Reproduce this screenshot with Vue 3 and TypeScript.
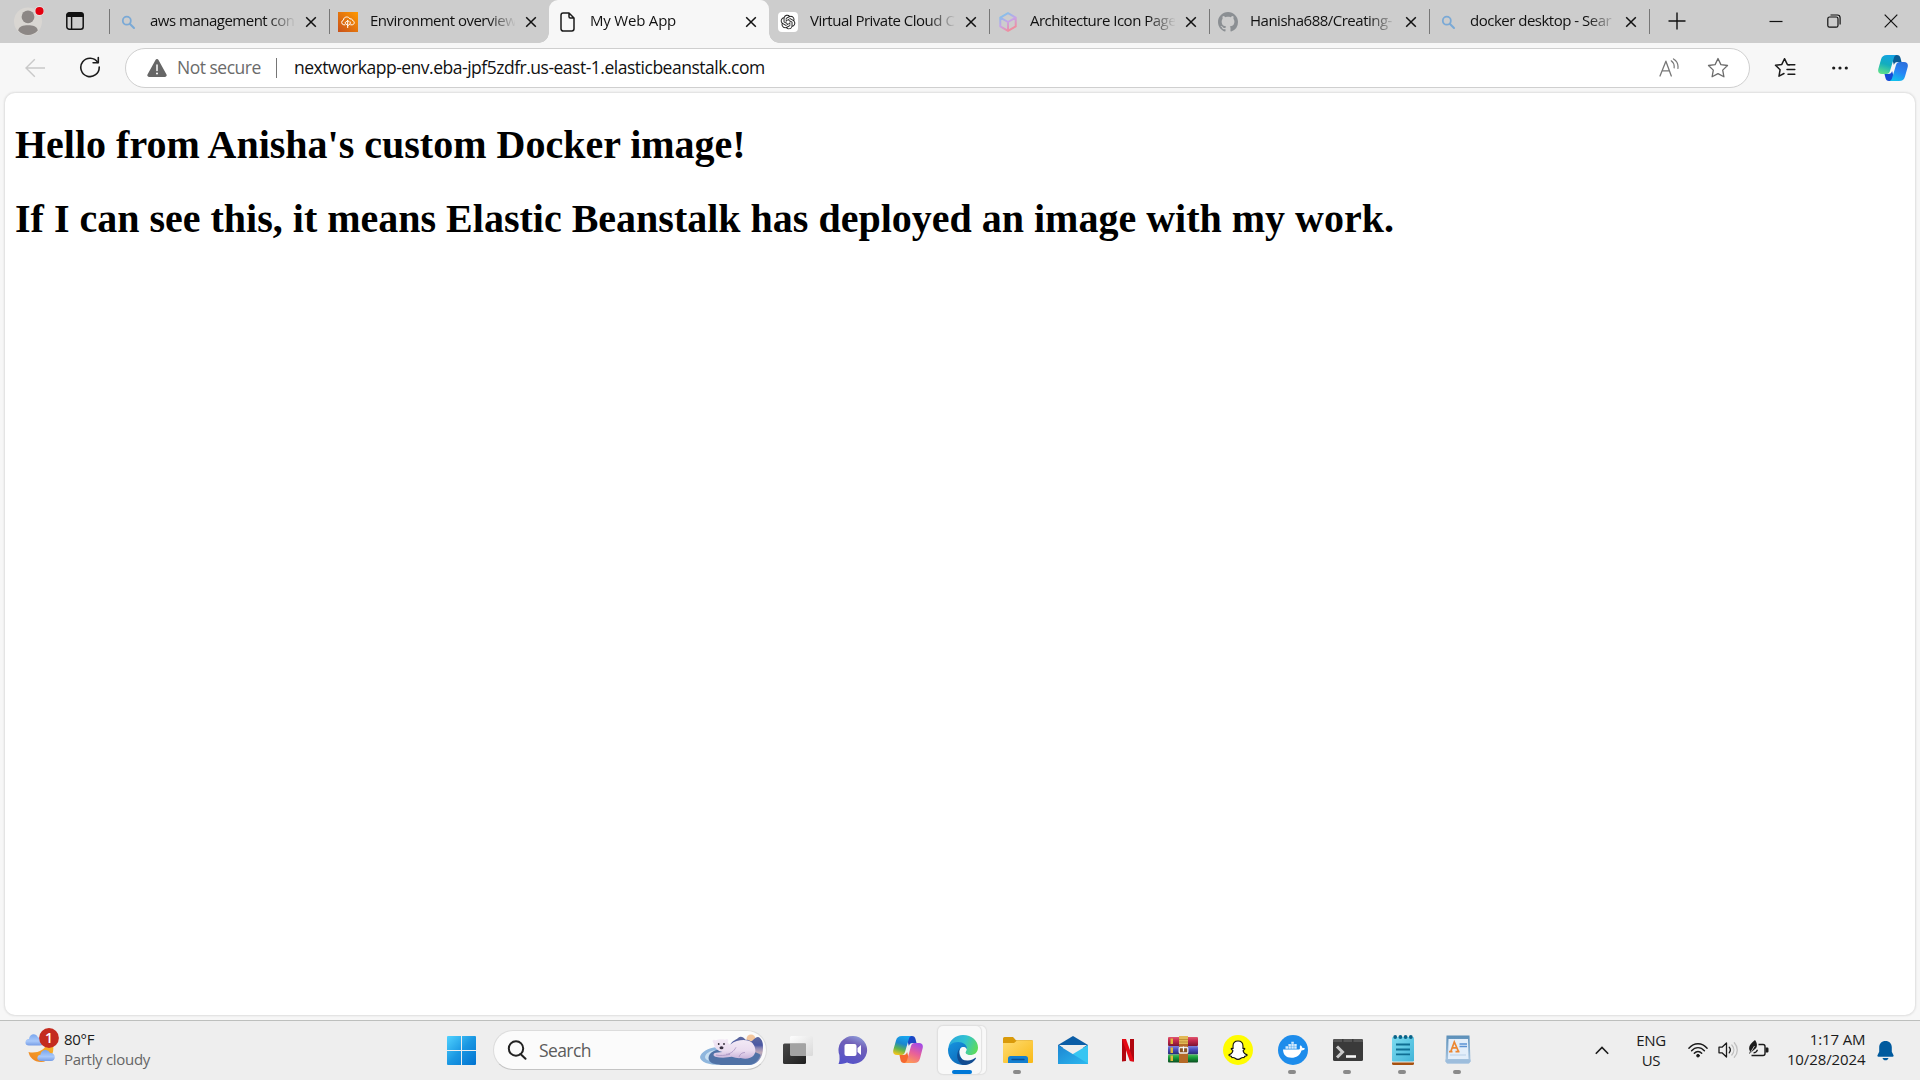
<script setup lang="ts">
interface Tab {
  title: string
  icon: 'search' | 'aws' | 'page' | 'openai' | 'cube' | 'github'
  active?: boolean
  divider?: boolean
}

interface TaskItem {
  name: string
  state?: 'running' | 'active'
}

const tabs: Tab[] = [
  { title: 'aws management con', icon: 'search', divider: true },
  { title: 'Environment overview', icon: 'aws', divider: true },
  { title: 'My Web App', icon: 'page', active: true },
  { title: 'Virtual Private Cloud C', icon: 'openai' },
  { title: 'Architecture Icon Page', icon: 'cube', divider: true },
  { title: 'Hanisha688/Creating-', icon: 'github', divider: true },
  { title: 'docker desktop - Sear', icon: 'search', divider: true },
]

const taskItems: TaskItem[] = [
  { name: 'taskview' },
  { name: 'chat' },
  { name: 'copilot' },
  { name: 'edge', state: 'active' },
  { name: 'explorer', state: 'running' },
  { name: 'mail' },
  { name: 'netflix' },
  { name: 'winrar' },
  { name: 'snapchat' },
  { name: 'docker', state: 'running' },
  { name: 'terminal', state: 'running' },
  { name: 'notepad', state: 'running' },
  { name: 'wordpad', state: 'running' },
]
</script>

<template>
  <div class="desktop">
    <header class="tabstrip">
      <div class="profile">
        <svg width="32" height="32" viewBox="0 0 32 32">
          <circle cx="16" cy="17.5" r="14" fill="#d9d6d2" />
          <circle cx="16" cy="12.8" r="6.4" fill="#8c8785" />
          <path d="M6.200 26.500C7 22.200 11 21.300 16 21.300s9 .9 9.800 5.200A13.500 13.500 0 0 1 16 31a13.500 13.500 0 0 1-9.800-4.500z" fill="#8c8785" />
          <circle cx="27.500" cy="7" r="4.800" fill="#e8e8e8" />
          <circle cx="27.500" cy="7" r="4.100" fill="#e3000f" />
        </svg>
      </div>
      <div class="workspaces">
        <svg width="20" height="20" viewBox="0 0 20 20">
          <rect x="1.800" y="1.800" width="16.400" height="16.400" rx="2.500" fill="none" stroke="#111" stroke-width="1.500" />
          <path d="M1.500 6V4a2.500 2.500 0 0 1 2.500-2.500h12A2.500 2.500 0 0 1 18.500 4v2z" fill="#111" />
          <path d="M6.600 5v13" stroke="#111" stroke-width="1.400" />
        </svg>
      </div>

      <div v-for="(tab, i) in tabs" :key="i" class="tab" :class="{ active: tab.active, divided: tab.divider }">
        <svg class="favicon" width="20" height="20" viewBox="0 0 20 20">
          <g v-if="tab.icon === 'search'" fill="none" stroke="#7aa9d6" stroke-linecap="round">
            <circle cx="8.800" cy="8.700" r="4" stroke-width="1.800" />
            <path d="M12 12l4 4" stroke-width="2" />
          </g>
          <g v-else-if="tab.icon === 'aws'">
            <defs>
              <linearGradient id="awsGrad" x1="0" y1="1" x2="1" y2="0">
                <stop offset="0" stop-color="#c8511b" /><stop offset="1" stop-color="#ff9900" />
              </linearGradient>
            </defs>
            <rect width="20" height="20" fill="url(#awsGrad)" />
            <g fill="none" stroke="#fff" stroke-width="1" stroke-linejoin="round" stroke-linecap="round">
              <path d="M7 12.800H5.800a2.400 2.400 0 0 1-.3-4.700C5.500 4.300 10.800 4 12 7c1.600-.6 2.400.4 2.500 1.500 2.500.5 2.200 4.100-.2 4.300h-1.600" />
              <path d="M9.700 15.600V8.500M8.400 9.700l1.300-1.300L11 9.700M7.300 10.200v1.200l2.400 2M12.200 10v1.800l-2.500 2" />
            </g>
          </g>
          <path v-else-if="tab.icon === 'page'" d="M5.200 1h5.800l5 5v10.800a2.200 2.200 0 0 1-2.200 2.200H5.200A2.200 2.200 0 0 1 3 16.800V3.200A2.200 2.200 0 0 1 5.200 1zM11 1v3.800A1.200 1.200 0 0 0 12.200 6H16" fill="none" stroke="#1b1b1b" stroke-width="1.500" stroke-linejoin="round" />
          <g v-else-if="tab.icon === 'openai'">
            <rect width="20" height="20" rx="4" fill="#fff" />
            <path transform="translate(2.700 2.700) scale(.61)" fill="#222" d="M22.2819 9.8211a5.9847 5.9847 0 0 0-.5157-4.9108 6.0462 6.0462 0 0 0-6.5098-2.9A6.0651 6.0651 0 0 0 4.9807 4.1818a5.9847 5.9847 0 0 0-3.9977 2.9 6.0462 6.0462 0 0 0 .7427 7.0966 5.98 5.98 0 0 0 .511 4.9107 6.051 6.051 0 0 0 6.5146 2.9001A5.9847 5.9847 0 0 0 13.2599 24a6.0557 6.0557 0 0 0 5.7718-4.2058 5.9894 5.9894 0 0 0 3.9977-2.9001 6.0557 6.0557 0 0 0-.7475-7.0729zm-9.022 12.6081a4.4755 4.4755 0 0 1-2.8764-1.0408l.1419-.0804 4.7783-2.7582a.7948.7948 0 0 0 .3927-.6813v-6.7369l2.02 1.1686a.071.071 0 0 1 .038.052v5.5826a4.504 4.504 0 0 1-4.4945 4.4944zm-9.6607-4.1254a4.4708 4.4708 0 0 1-.5346-3.0137l.142.0852 4.783 2.7582a.7712.7712 0 0 0 .7806 0l5.8428-3.3685v2.3324a.0804.0804 0 0 1-.0332.0615L9.74 19.9502a4.4992 4.4992 0 0 1-6.1408-1.6464zM2.3408 7.8956a4.485 4.485 0 0 1 2.3655-1.9728V11.6a.7664.7664 0 0 0 .3879.6765l5.8144 3.3543-2.0201 1.1685a.0757.0757 0 0 1-.071 0l-4.8303-2.7865A4.504 4.504 0 0 1 2.3408 7.872zm16.5963 3.8558L13.1038 8.364 15.1192 7.2a.0757.0757 0 0 1 .071 0l4.8303 2.7913a4.4944 4.4944 0 0 1-.6765 8.1042v-5.6772a.79.79 0 0 0-.407-.667zm2.0107-3.0231l-.142-.0852-4.7735-2.7818a.7759.7759 0 0 0-.7854 0L9.409 9.2297V6.8974a.0662.0662 0 0 1 .0284-.0615l4.8303-2.7866a4.4992 4.4992 0 0 1 6.6802 4.66zM8.3065 12.863l-2.02-1.1638a.0804.0804 0 0 1-.038-.0567V6.0742a4.4992 4.4992 0 0 1 7.3757-3.4537l-.142.0805L8.704 5.459a.7948.7948 0 0 0-.3927.6813zm1.0976-2.3654l2.602-1.4998 2.6069 1.4998v2.9994l-2.5974 1.4997-2.6067-1.4997z" />
          </g>
          <g v-else-if="tab.icon === 'cube'">
            <defs>
              <linearGradient id="cubeGrad" x1="0.200" y1="0" x2="0.700" y2="1">
                <stop offset="0" stop-color="#7cc4ea" /><stop offset=".5" stop-color="#c7a3e8" /><stop offset="1" stop-color="#f58b95" />
              </linearGradient>
            </defs>
            <path d="M10 1.200l7.700 4.400v8.800L10 18.800l-7.700-4.400V5.600zM2.300 5.600L10 10l7.700-4.400M10 10v8.800" fill="none" stroke="url(#cubeGrad)" stroke-width="2" stroke-linejoin="round" />
          </g>
          <path v-else fill="#8b8f93" transform="scale(1.250)" d="M8 0C3.580 0 0 3.580 0 8c0 3.540 2.290 6.530 5.470 7.590.4.070.55-.17.55-.38 0-.19-.01-.82-.01-1.490-2.010.37-2.530-.49-2.690-.94-.09-.23-.48-.94-.82-1.130-.28-.15-.68-.52-.01-.53.63-.01 1.080.58 1.230.82.72 1.210 1.870.87 2.330.66.070-.52.28-.87.510-1.070-1.780-.2-3.640-.89-3.640-3.950 0-.87.31-1.590.82-2.150-.08-.2-.36-1.020.08-2.120 0 0 .67-.21 2.200.82.64-.18 1.320-.27 2-.27s1.360.09 2 .27c1.530-1.040 2.200-.82 2.200-.82.44 1.100.16 1.920.08 2.120.51.56.82 1.270.82 2.150 0 3.070-1.870 3.750-3.650 3.950.29.25.54.73.54 1.480 0 1.070-.01 1.930-.01 2.200 0 .21.15.46.55.38A8.010 8.010 0 0 0 16 8c0-4.420-3.580-8-8-8z" />
        </svg>
        <span class="title">{{ tab.title }}</span>
        <svg class="close" width="12" height="12" viewBox="0 0 12 12"><path d="M1.200 1.200l9.600 9.600M10.800 1.200l-9.600 9.600" stroke="#111" stroke-width="1.500" /></svg>
      </div>

      <div class="newtab">
        <svg width="20" height="20" viewBox="0 0 20 20"><path d="M10 1.500v17M1.500 10h17" stroke="#111" stroke-width="1.400" /></svg>
      </div>
      <div class="winctl">
        <svg width="14" height="14" viewBox="0 0 14 14"><path d="M.5 7.500h13" stroke="#111" stroke-width="1.200" /></svg>
        <svg width="14" height="14" viewBox="0 0 14 14" fill="none" stroke="#111" stroke-width="1.200">
          <rect x=".8" y="3" width="10.200" height="10.200" rx="1.800" />
          <path d="M3.500 1h6.800a2.800 2.800 0 0 1 2.800 2.800v6.700" />
        </svg>
        <svg width="14" height="14" viewBox="0 0 14 14"><path d="M.7.7l12.600 12.600M13.300.7L.7 13.300" stroke="#111" stroke-width="1.200" /></svg>
      </div>
    </header>

    <div class="toolbar">
      <svg class="back" width="20" height="20" viewBox="0 0 20 20" fill="none" stroke="#c9c9c9" stroke-width="1.400"><path d="M20 10H1M9.800 1.300L1 10l8.800 8.700" /></svg>
      <svg class="reload" width="22" height="22" viewBox="0 0 22 22" fill="none" stroke="#1b1b1b" stroke-width="1.600" stroke-linecap="round" stroke-linejoin="round">
        <path d="M18.800 6.500A9.200 9.200 0 1 0 20.200 11" /><path d="M19.300 1.500v5.200h-5.200" />
      </svg>
      <div class="address">
        <svg class="warn" width="20" height="18" viewBox="0 0 20 18">
          <path d="M8.500.9a1.700 1.700 0 0 1 3 0l8 14.600a1.600 1.600 0 0 1-1.400 2.400H1.900A1.600 1.600 0 0 1 .5 15.500z" fill="#666" />
          <path d="M10 6v5.500" stroke="#fff" stroke-width="1.500" stroke-linecap="round" /><circle cx="10" cy="14.400" r="1" fill="#fff" />
        </svg>
        <span class="notsecure">Not secure</span>
        <i class="bar"></i>
        <span class="url">nextworkapp-env.eba-jpf5zdfr.us-east-1.elasticbeanstalk.com</span>
        <svg class="read" width="20" height="20" viewBox="0 0 20 20" fill="none" stroke="#777" stroke-width="1.300" stroke-linecap="round" stroke-linejoin="round">
          <path d="M1 18L6.900 3.200 12.300 18M3.200 12.800h7.300" /><path d="M12.200 2.800c2.300 1.700 3.300 4.100 2.900 7M14.500.9c3.400 2 5 5.200 4.400 9.500" stroke-width="1.200" />
        </svg>
        <svg class="star" width="22" height="22" viewBox="0 0 22 22" fill="none" stroke="#6b6b6b" stroke-width="1.300" stroke-linejoin="round">
          <path d="M11 1.500l2.900 6.100 6.600.9-4.800 4.600 1.200 6.700L11 16.600l-5.900 3.200 1.200-6.700L1.500 8.500l6.600-.9z" />
        </svg>
      </div>
      <svg class="favs" width="22" height="22" viewBox="0 0 22 22" fill="none" stroke="#1b1b1b" stroke-width="1.500" stroke-linejoin="round" stroke-linecap="round">
        <path d="M15.400 7.700l-2.100-.3L10.500 1.700 7.800 7.400l-6.300.9 4.600 4.400L5 19.200l5-2.700" /><path d="M13.800 7.700h7M13 12.500h7.800M14 17.200h6.800" />
      </svg>
      <svg class="dots" width="18" height="6" viewBox="0 0 18 6" fill="#1b1b1b"><circle cx="2.700" cy="3" r="1.600" /><circle cx="9" cy="3" r="1.600" /><circle cx="15.300" cy="3" r="1.600" /></svg>
      <svg class="sidepilot" width="30" height="28" viewBox="0 0 30 28">
        <defs>
          <linearGradient id="cpA" x1=".6" y1="0" x2=".3" y2="1"><stop offset="0" stop-color="#13a3e3" /><stop offset=".5" stop-color="#13aebd" /><stop offset="1" stop-color="#5ee08b" /></linearGradient>
          <linearGradient id="cpB" x1=".7" y1="0" x2=".3" y2="1"><stop offset="0" stop-color="#2b70dc" /><stop offset=".5" stop-color="#2785f5" /><stop offset="1" stop-color="#10c1ec" /></linearGradient>
        </defs>
        <path d="M13 1h6c2 0 3 1 3.500 3l1 4h-4c-2 0-3 1-3.600 3z" fill="#0a5c94" />
        <path d="M17 27h-6c-2 0-3-1-3.500-3l-1-4h4c2 0 3-1 3.600-3z" fill="#154bd6" />
        <path d="M9 1h9.500c-1.500.4-2.200 1.500-2.700 3.200L12 17c-.6 2-1.700 3-3.500 3H4C.8 20-.3 18 .3 15L3 5.500C3.800 2.500 5.500 1 9 1z" fill="url(#cpA)" />
        <path d="M21 27h-9.500c1.500-.4 2.200-1.500 2.700-3.200L18 11c.6-2 1.700-3 3.500-3H26c3.200 0 4.300 2 3.700 5L27 22.500c-.8 3-2.500 4.500-6 4.500z" fill="url(#cpB)" />
      </svg>
    </div>

    <div class="frame">
      <main class="page">
        <h1>Hello from Anisha's custom Docker image!</h1>
        <h1>If I can see this, it means Elastic Beanstalk has deployed an image with my work.</h1>
      </main>
    </div>

    <footer class="taskbar">
      <div class="weather">
        <svg width="36" height="36" viewBox="0 0 36 36">
          <defs>
            <linearGradient id="cloud" x1="0" y1="0" x2="0" y2="1"><stop offset="0" stop-color="#79a6ee" /><stop offset=".6" stop-color="#a9c9fa" /><stop offset="1" stop-color="#769de6" /></linearGradient>
            <linearGradient id="moon" x1="0" y1="1" x2="1" y2="0"><stop offset="0" stop-color="#ee8122" /><stop offset="1" stop-color="#f8b62c" /></linearGradient>
          </defs>
          <path d="M3.500 25c8 2 16-2 17.500-7h7c2 9-4 17-12 17-7 0-11.500-4.500-12.500-10z" fill="url(#moon)" />
          <path d="M4 18.500c-5 0-4.500-6.500 0-6.500C4.500 6.500 11 5.500 13 10.500c4.500-.5 6 1.500 6 4s-1 4-4 4z" fill="url(#cloud)" />
          <path d="M16 34c-5 0-4.500-6-.6-6.300C16 22 23 21.500 25 26c6-.5 6.500 8 1 8z" fill="url(#cloud)" />
          <circle cx="24" cy="11" r="9.900" fill="#c42b1f" />
        </svg>
        <b class="badge">1</b>
        <div class="wtext"><span>80°F</span><span class="dim">Partly cloudy</span></div>
      </div>

      <svg class="start" width="29" height="29" viewBox="0 0 29 29">
        <defs><linearGradient id="win" x1="0" y1="0" x2="1" y2="1"><stop offset="0" stop-color="#50d2ff" /><stop offset=".5" stop-color="#1a97e2" /><stop offset="1" stop-color="#0072d0" /></linearGradient></defs>
        <path d="M1 0h13v14H0V1a1 1 0 0 1 1-1zM15 0h13a1 1 0 0 1 1 1v13H15zM0 15h14v14H1a1 1 0 0 1-1-1zM15 15h14v13a1 1 0 0 1-1 1H15z" fill="url(#win)" />
      </svg>

      <div class="search">
        <svg width="20" height="20" viewBox="0 0 20 20" fill="none" stroke="#222" stroke-width="2" stroke-linecap="round"><circle cx="9" cy="8.500" r="7.200" /><path d="M13.500 14l5 4.800" /></svg>
        <span>Search</span>
        <svg class="bear" width="64" height="32" viewBox="0 0 64 32">
          <defs>
            <linearGradient id="sky" x1="0" y1="0" x2="0" y2="1"><stop offset="0" stop-color="#5f6a9f" /><stop offset=".3" stop-color="#4a57a3" /><stop offset=".4" stop-color="#8b86b4" /><stop offset=".55" stop-color="#c0aab8" /><stop offset="1" stop-color="#5478b8" /></linearGradient>
            <linearGradient id="fur" x1="0" y1="0" x2="0" y2="1"><stop offset="0" stop-color="#f3eaf6" /><stop offset=".6" stop-color="#eadcef" /><stop offset="1" stop-color="#c9b4da" /></linearGradient>
          </defs>
          <circle cx="51" cy="5" r="4.500" fill="#f3c79f" />
          <path d="M30 11c3-5 6-5 8-7 3-3 6 0 8 2 3-1 4 2 6 1 4-4 6-5 8-3 3 3 3 6 3 10 0 10-6 17-14 17H28z" fill="url(#sky)" />
          <path d="M0 23c1-5 8-9 17-10l4 3c-6 2-10 5-9 9 0 3 4 5 8 6-11 0-20-3-20-8z" fill="#8fb6dd" />
          <path d="M5 23c1-4 5-6 10-7-3 3-6 8-1 12-4-1-9-2-9-5z" fill="#c9e0f2" />
          <path d="M8.500 24c0-6 8-9 16-9 12 0 30 1 36 6-2 6-7 10-14 10H24c-9 0-15.500-2-15.500-7z" fill="#5072a6" />
          <path d="M13.800 9.500c-2.500-3-.3-4.800 1.800-3.200 2-1.100 6.500-1.500 9.400-.6 2.500-1.800 4.300.1 2.600 2.600 1 1.200 1.800 2.200 3 2 7-5.500 18-5.500 22-1 2.800 3.500 4 8.500 1.200 12-2.500 3.200-8 4-13 2.800-3 .4-6-.5-9-1.300-5 1-11.500 1.200-16.500 0-2.700-.8-2-3.900.7-4l6.500-.7c-4.500-1.200-8.500-4-8.700-8.600z" fill="url(#fur)" />
          <path d="M26 20.300c4 0 8-3 10-7M39 23c1-3 3-4.500 6-4.500M16 21c4 1 9 .4 14-.6" fill="none" stroke="#a994c2" stroke-width=".8" />
          <circle cx="18.700" cy="10" r=".9" fill="#2d2733" /><circle cx="24" cy="10" r=".9" fill="#2d2733" /><ellipse cx="21.500" cy="13.700" rx="2" ry="1.500" fill="#3a3142" />
        </svg>
      </div>

      <nav class="apps">
        <div v-for="item in taskItems" :key="item.name" class="app" :class="item.state">
          <svg width="30" height="30" viewBox="0 0 30 30">
            <template v-if="item.name === 'taskview'">
              <defs>
                <linearGradient id="tvA" x1="0" y1="0" x2="1" y2="1"><stop offset="0" stop-color="#484848" /><stop offset="1" stop-color="#1f1f1f" /></linearGradient>
                <linearGradient id="tvB" x1="0" y1="0" x2="1" y2="1"><stop offset="0" stop-color="#fdfdfd" /><stop offset="1" stop-color="#d9d9d9" /></linearGradient>
              </defs>
              <rect x="0" y="8.500" width="23" height="20.500" rx="1.500" fill="url(#tvA)" />
              <path d="M8.500 1h20A1.500 1.500 0 0 1 30 2.500v17a1.500 1.500 0 0 1-1.500 1.500H23V8.500H7v-6A1.500 1.500 0 0 1 8.500 1z" fill="url(#tvB)" />
              <path d="M7 8.500h16V21H8.500A1.500 1.500 0 0 1 7 19.500z" fill="#a3a3a3" />
            </template>
            <template v-else-if="item.name === 'chat'">
              <defs><linearGradient id="chatG" x1=".8" y1="0" x2=".4" y2="1"><stop offset="0" stop-color="#92a2dc" /><stop offset=".35" stop-color="#7060b8" /><stop offset="1" stop-color="#5552c8" /></linearGradient></defs>
              <path d="M15 1a14 14 0 1 1-6 26.600C6.500 29 3.500 29 .5 29 2 26 1.500 23 1.400 20A14 14 0 0 1 15 1z" fill="url(#chatG)" />
              <rect x="6.500" y="9" width="12" height="12" rx="2" fill="#fff" /><path d="M19.500 13l3.500-3v10l-3.500-3z" fill="#fff" />
            </template>
            <template v-else-if="item.name === 'copilot'">
              <defs>
                <linearGradient id="cA" x1=".6" y1="0" x2=".3" y2="1"><stop offset="0" stop-color="#18a6ef" /><stop offset=".4" stop-color="#1a86d0" /><stop offset=".7" stop-color="#5eb34e" /><stop offset="1" stop-color="#f2c51c" /></linearGradient>
                <linearGradient id="cB" x1=".7" y1="0" x2=".3" y2="1"><stop offset="0" stop-color="#a44be5" /><stop offset=".5" stop-color="#e8609a" /><stop offset="1" stop-color="#ff9a55" /></linearGradient>
              </defs>
              <path d="M13 1h6c2 0 3 1 3.500 3l1 4h-4c-2 0-3 1-3.600 3z" fill="#1a46c5" />
              <path d="M17 28h-6c-2 0-3-1-3.500-3l-1-5h4c2 0 3-1 3.600-3z" fill="#f5682f" />
              <path d="M9 1h9.500c-1.500.4-2.200 1.500-2.700 3.200L12 17c-.6 2-1.700 3-3.500 3H4C.8 20-.3 18 .3 15L3 5.500C3.800 2.500 5.500 1 9 1z" fill="url(#cA)" />
              <path d="M21 28h-9.500c1.500-.4 2.200-1.500 2.700-3.200L18 11c.6-2 1.700-3 3.500-3H26c3.200 0 4.300 2 3.700 5L27 23.500c-.8 3-2.500 4.500-6 4.500z" fill="url(#cB)" />
            </template>
            <template v-else-if="item.name === 'edge'">
              <defs>
                <linearGradient id="eA" x1="0" y1=".3" x2="1" y2=".6"><stop offset="0" stop-color="#2ba8dd" /><stop offset=".5" stop-color="#31c2d2" /><stop offset="1" stop-color="#5edb5a" /></linearGradient>
                <linearGradient id="eB" x1="0" y1="0" x2=".6" y2="1"><stop offset="0" stop-color="#1694e0" /><stop offset="1" stop-color="#0d69b8" /></linearGradient>
              </defs>
              <path d="M.5 12C1.500 5 7.500 0 15 0c9 0 15 6 15 12.500 0 5-3.500 7.500-8 7.500-4 0-5.500-1.500-4.500-3 2.500-3.500 0-7.500-5-7.500C7 9 3 10 .5 12z" fill="url(#eA)" />
              <path d="M0 15C0 10 4.500 7 10 7c5.500 0 9 3 9 7-2-3-7-3-7.500 2C11 23 17 28 21 28.500 11 33 0 26 0 15z" fill="url(#eB)" />
              <path d="M12 13c-3 6 0 13 8 12.500 3 0 5-1 7-2.500.7-.5 1.200 0 .8.700C25 28 20.500 30 15.500 30 9 28 7 19 12 13z" fill="#124c91" />
              <path d="M12 16c.3-5.200 5.700-5 6.500-1.500-.1 1.700-1.600 2.500-.8 3.700 1.800 2.500 8 2.800 11 .5-1 2.600-2.700 3.600-5 4-6 1-11.500-1.700-11.700-6.700z" fill="#f8f8f8" />
            </template>
            <template v-else-if="item.name === 'explorer'">
              <defs><linearGradient id="fold" x1="0" y1="0" x2="1" y2="1"><stop offset="0" stop-color="#ffdc72" /><stop offset="1" stop-color="#f9b915" /></linearGradient></defs>
              <path d="M0 3.500A1.500 1.500 0 0 1 1.500 2H10l3 3.300h15.500A1.500 1.500 0 0 1 30 7v5H0z" fill="#d99a0a" />
              <path d="M0 8h11l3-2.500h16V27a1 1 0 0 1-1 1H1a1 1 0 0 1-1-1z" fill="url(#fold)" />
              <path d="M5 28v-4.500A2.500 2.500 0 0 1 7.500 21h15a2.500 2.500 0 0 1 2.500 2.500V28z" fill="#147fd0" /><path d="M9 24.500h12" stroke="#0b4f91" stroke-width="1.300" stroke-linecap="round" />
            </template>
            <template v-else-if="item.name === 'mail'">
              <defs><linearGradient id="ml" x1="0" y1="0" x2="1" y2="1"><stop offset="0" stop-color="#1c85d2" /><stop offset="1" stop-color="#2cb8ef" /></linearGradient></defs>
              <path d="M15 1l15 9v3H0v-3z" fill="#0b5da6" /><path d="M1 10h28L15 20z" fill="#eee" />
              <path d="M30 10L15 19v10h15z" fill="#36c5f2" /><path d="M0 10l30 18.500V29H0z" fill="url(#ml)" />
            </template>
            <template v-else-if="item.name === 'netflix'">
              <path d="M9 4h4v22l-4 .4zM17 4h4v22.400l-4-.4z" fill="#b1060f" /><path d="M9 4h4l8 22.400-4.200-.4z" fill="#e50914" />
            </template>
            <template v-else-if="item.name === 'winrar'">
              <defs>
                <linearGradient id="wrR" x1="0" y1="0" x2="0" y2="1"><stop offset="0" stop-color="#e0566f" /><stop offset=".4" stop-color="#c42a4e" /><stop offset="1" stop-color="#7d1433" /></linearGradient>
                <linearGradient id="wrB" x1="0" y1="0" x2="0" y2="1"><stop offset="0" stop-color="#8184dd" /><stop offset=".4" stop-color="#4a4fc0" /><stop offset="1" stop-color="#26286f" /></linearGradient>
                <linearGradient id="wrG" x1="0" y1="0" x2="0" y2="1"><stop offset="0" stop-color="#4cc05c" /><stop offset=".4" stop-color="#169a3a" /><stop offset="1" stop-color="#0a4d20" /></linearGradient>
              </defs>
              <rect x="0" y="2" width="30" height="9" rx="1" fill="url(#wrR)" /><rect x="0" y="11" width="30" height="8.500" rx="1" fill="url(#wrB)" /><rect x="0" y="19.500" width="30" height="8" rx="1" fill="url(#wrG)" />
              <path d="M2.500 3.500h2.500v5.500H2.500zM2.500 12.500h2.500V18H2.500zM2.500 20.500h2.500v5.500H2.500z" fill="#e2b83c" />
              <rect x="11" y="1" width="9" height="27" fill="#b56a28" /><rect x="11" y="1" width="9" height="8" fill="#e2b957" /><path d="M11 4.500h9M11 7h9" stroke="#b8862d" stroke-width=".8" />
              <rect x="11.200" y="12.500" width="8.600" height="5.500" rx="1" fill="#8a5424" stroke="#eee" stroke-width="1.300" /><path d="M15.500 11.500v5" stroke="#fff" stroke-width="1.200" />
            </template>
            <template v-else-if="item.name === 'snapchat'">
              <circle cx="15" cy="15" r="15" fill="#fffc00" />
              <path d="M15 6c3.300 0 5 2.300 5 5.200l-.1 2.200c.7.300 1.500-.4 1.900.2.400.8-1.700 1.400-1.700 2.200.5 2 2.200 3.500 4 4 .4.900-1.300 1.300-2.500 1.600l-.5 1.200c-1.200-.2-2.200-.2-3.200.6-1.900 1.500-3.900 1.500-5.800 0-1-.8-2-.8-3.200-.6l-.5-1.200c-1.200-.3-2.900-.7-2.500-1.600 1.800-.5 3.500-2 4-4 0-.8-2.100-1.400-1.700-2.200.4-.6 1.200.1 1.900-.2l-.1-2.200C10 8.300 11.700 6 15 6z" fill="#fff" stroke="#111" stroke-width="1.100" stroke-linejoin="round" />
            </template>
            <template v-else-if="item.name === 'docker'">
              <circle cx="15" cy="15" r="15" fill="#1d8ceb" />
              <path d="M5 14.500h15.500c1 0 1.500-.7 1.500-1.500-.4-1-.2-2 .6-2.800.9.600 1.500 1.500 1.500 2.500 1 0 2 .1 2.900.8-.7 1.500-2 1.900-3.500 1.900-1.600 4.800-5 7.300-10 7.300-5.500 0-8.300-3-8.500-8.200z" fill="#fff" />
              <path d="M7.500 11.300H10v2.400H7.500zM10.400 11.300h2.500v2.400h-2.500zM13.300 11.300h2.500v2.400h-2.500zM16.200 11.300h2.500v2.400h-2.500zM10.400 9h2.500v2h-2.500zM13.300 9h2.500v2h-2.500zM16.200 9h2.500v2h-2.500zM13.300 6.800h2.500v1.900h-2.500z" fill="#d5eafc" />
            </template>
            <template v-else-if="item.name === 'terminal'">
              <rect x="0" y="4" width="30" height="22" rx="1.500" fill="#3a3a3a" /><path d="M0 7V5.500A1.500 1.500 0 0 1 1.500 4H9v3zM10.500 4H19v3h-8.500zM20.500 4h8A1.500 1.500 0 0 1 30 5.500V7h-9.500z" fill="#555" />
              <path d="M4 11.500l5.500 5.500L4 22.500" fill="none" stroke="#c9c9c9" stroke-width="3" /><path d="M13 21.500h10" stroke="#f5f5f5" stroke-width="2.600" />
            </template>
            <template v-else-if="item.name === 'notepad'">
              <defs><linearGradient id="np" x1="0" y1="0" x2="1" y2="1"><stop offset="0" stop-color="#7edcf0" /><stop offset="1" stop-color="#41b4d8" /></linearGradient></defs>
              <path d="M4 27h22v1.500a1.500 1.500 0 0 1-1.500 1.500h-19A1.500 1.500 0 0 1 4 28.500z" fill="#a6500f" /><path d="M4 26h22v1.500H4z" fill="#f0e9e2" />
              <rect x="4" y="2" width="22" height="24.500" rx="1.200" fill="url(#np)" />
              <g fill="#0b6388"><circle cx="7.200" cy="2" r="1.900" /><circle cx="12.400" cy="2" r="1.900" /><circle cx="17.600" cy="2" r="1.900" /><circle cx="22.800" cy="2" r="1.900" /></g>
              <path d="M8 9.500h14M8 14.500h14M8 19.300h14" stroke="#0f6e93" stroke-width="1.800" />
            </template>
            <template v-else>
              <defs><linearGradient id="wp" x1="0" y1="0" x2="0" y2="1"><stop offset="0" stop-color="#5b8fb9" /><stop offset="1" stop-color="#b4cde6" /></linearGradient></defs>
              <path d="M3.500.5h23l1 26-2 2H4.500l-2-2z" fill="url(#wp)" /><path d="M5.500 4h19.500l.5 20h-20.500z" fill="#e3eefa" />
              <path d="M2.500 24.500h25v2l-1.500 2H4l-1.500-2z" fill="#9dbddc" />
              <path d="M6 16.700h3.500M12.500 16.700h4M8 16L11.300 7l4 9M9.500 12.800h4.500" fill="none" stroke="#ec8733" stroke-width="1.700" />
              <path d="M16.500 9H24M16.500 11.500H24" stroke="#5b92d4" stroke-width="1.400" /><path d="M7 20h16" stroke="#b9d0e8" />
            </template>
          </svg>
          <i v-if="item.state" class="mark"></i>
        </div>
      </nav>

      <div class="tray">
        <svg class="chev" width="14" height="9" viewBox="0 0 14 9"><path d="M.8 7.800L7 1.500l6.200 6.300" fill="none" stroke="#1b1b1b" stroke-width="1.600" /></svg>
        <div class="lang"><span>ENG</span><span>US</span></div>
        <svg class="wifi" width="20" height="16" viewBox="0 0 20 16" fill="none" stroke="#1b1b1b" stroke-width="1.400" stroke-linecap="round">
          <path d="M.9 6.300c5-6 13.200-6 18.200 0M3.600 8.800c3.700-4.200 9.100-4.200 12.800 0M6.300 11.300c2.200-2.500 5.200-2.500 7.400 0" /><circle cx="10" cy="13.700" r="1.400" fill="#1b1b1b" stroke-width=".8" />
        </svg>
        <svg class="vol" width="21" height="18" viewBox="0 0 21 18" fill="none" stroke="#1b1b1b" stroke-width="1.300" stroke-linecap="round" stroke-linejoin="round">
          <path d="M1 6.200h3L8.500 2v14L4 11.800H1z" /><path d="M11.200 6.200c1.500 1.800 1.500 3.800 0 5.600" /><path d="M13.800 4c2.700 3 2.700 7 0 10M16.300 1.700c4 4.300 4 10.300 0 14.600" stroke="#c0c0c0" />
        </svg>
        <svg class="batt" width="21" height="18" viewBox="0 0 21 18">
          <path d="M10.500 4.500H15a2 2 0 0 1 2 2v7a2 2 0 0 1-2 2H3.500" fill="none" stroke="#1b1b1b" stroke-width="1.400" /><path d="M17.500 7.500h1.700c.8 0 1.300.5 1.300 1.300v2.400c0 .8-.5 1.300-1.300 1.300h-1.700z" fill="#1b1b1b" />
          <path d="M7 0c2 2.500 2.500 5.500 1.200 8L3 12.500 1 14l1-2.800C-.5 7 2.500 3.500 7 0z" fill="#1b1b1b" /><path d="M2.500 12.500L6.500 6" stroke="#eee" stroke-width=".8" /><path d="M5.500 12.800c2.200 0 3.300-1 4-3" fill="none" stroke="#1b1b1b" stroke-width="1.200" />
        </svg>
        <div class="clock"><span>1:17 AM</span><span>10/28/2024</span></div>
        <svg class="bell" width="17" height="20" viewBox="0 0 17 20" fill="#005a9e"><path d="M8.500 0c3.800 0 6.300 2.700 6.300 6.300v4.500l1.700 3.500c.3.800 0 1.400-.9 1.400H1.400c-.9 0-1.200-.6-.9-1.400l1.700-3.500V6.300C2.200 2.700 4.700 0 8.500 0zM5.500 17h6c-.5 1.500-1.500 2.300-3 2.300S6 18.500 5.500 17z" /></svg>
      </div>
    </footer>
  </div>
</template>

<style>
body {
  margin: 0;
  overflow: hidden;
}
</style>

<style scoped>
.desktop {
  width: 1920px;
  height: 1080px;
  display: flex;
  flex-direction: column;
  background: #f7f7f7;
  font-family: "Open Sans", "Noto Sans", sans-serif;
  font-size: 15px;
  color: #1b1b1b;
  white-space: nowrap;
}
svg {
  display: block;
  flex: none;
}
.tabstrip {
  height: 43px;
  flex: none;
  display: flex;
  background: #cdcdcd;
}
.profile {
  width: 65px;
  flex: none;
  padding: 4px 0 0 12px;
  box-sizing: border-box;
}
.workspaces {
  width: 44px;
  flex: none;
  padding-top: 11px;
}
.tab {
  width: 220px;
  height: 43px;
  flex: none;
  box-sizing: border-box;
  display: flex;
  align-items: center;
  padding-left: 9px;
  position: relative;
}
.tab.divided::before,
.newtab::before {
  content: "";
  position: absolute;
  left: 0;
  top: 9px;
  width: 1px;
  height: 25px;
  background: #777;
}
.tab.active {
  background: #f7f7f7;
  border-radius: 9px 9px 0 0;
}
.tab.active::before,
.tab.active::after {
  content: "";
  position: absolute;
  bottom: 0;
  width: 10px;
  height: 10px;
}
.tab.active::before {
  left: -10px;
  background: radial-gradient(circle at 0 0, #cdcdcd 9.500px, #f7f7f7 10px);
}
.tab.active::after {
  right: -10px;
  background: radial-gradient(circle at 100% 0, #cdcdcd 9.500px, #f7f7f7 10px);
}
.title {
  width: 145px;
  margin-left: 12px;
  line-height: 24px;
  letter-spacing: -0.5px;
  color: #111;
  padding-bottom: 3px;
  mask-image: linear-gradient(to right, #000 118px, transparent 146px);
}
.active .title {
  letter-spacing: -0.2px;
}
.close {
  margin-left: 9.500px;
}
.newtab {
  width: 111px;
  position: relative;
  padding: 11px 0 0 18px;
  box-sizing: border-box;
}
.winctl {
  display: flex;
  gap: 43.500px;
  padding: 14px 0 0 9px;
}
.toolbar {
  height: 49px;
  flex: none;
  display: flex;
  align-items: center;
}
.back {
  margin-left: 25px;
}
.reload {
  margin: -1px 24px 0 34px;
}
.address {
  width: 1625px;
  height: 40px;
  margin-top: 1px;
  box-sizing: border-box;
  flex: none;
  border: 1px solid #cfcfcf;
  border-radius: 20px;
  background: #fff;
  display: flex;
  align-items: center;
  padding-left: 21px;
  font-size: 17.500px;
}
.warn {
  margin-top: -1px;
}
.notsecure {
  width: 99px;
  margin-left: 10px;
  padding-bottom: 2px;
  color: #6b6b6b;
  letter-spacing: -0.5px;
}
.bar {
  width: 1px;
  height: 20px;
  background: #767676;
}
.url {
  flex: 1;
  margin-left: 17px;
  padding-bottom: 2px;
  color: #111;
  letter-spacing: -0.49px;
}
.star {
  margin: 0 20px 0 28px;
}
.favs {
  margin-left: 24px;
}
.dots {
  margin-left: 35px;
}
.sidepilot {
  margin-left: 29px;
}
.frame {
  flex: 1;
  padding: 1px 5px 4px;
  box-sizing: border-box;
}
.page {
  height: 922px;
  box-sizing: border-box;
  background: #fff;
  border-radius: 10px;
  box-shadow: 0 0 2px 1px #dedede;
  padding: 29px 10px;
}
h1 {
  margin: 0 0 28px;
  font: bold 40px/46px "Liberation Serif", serif;
  color: #000;
}
.taskbar {
  height: 60px;
  flex: none;
  box-sizing: border-box;
  border-top: 1px solid #bdbfbd;
  background: #eee;
  display: flex;
  line-height: 20px;
}
.weather {
  width: 447px;
  flex: none;
  padding: 6px 0 0 25px;
  box-sizing: border-box;
  display: flex;
  position: relative;
}
.badge {
  position: absolute;
  left: 39px;
  top: 7px;
  width: 20px;
  text-align: center;
  color: #fff;
  font-size: 14px;
  font-weight: 600;
}
.wtext {
  display: flex;
  flex-direction: column;
  margin: 2px 0 0 3px;
  letter-spacing: -0.3px;
}
.dim {
  color: #666;
}
.start {
  margin-top: 15px;
}
.search {
  width: 274px;
  height: 40px;
  box-sizing: border-box;
  margin: 9px 0 0 17px;
  border: 1px solid #dcdcdc;
  border-bottom-color: #c4c4c4;
  border-radius: 20px;
  background: #fbfbfb;
  display: flex;
  align-items: center;
  padding-left: 13px;
  font-size: 17.500px;
  color: #5c5c5c;
  letter-spacing: -0.6px;
}
.search span {
  flex: 1;
  margin-left: 12px;
}
.bear {
  margin-right: 2px;
}
.apps {
  display: flex;
  margin-left: 3px;
}
.app {
  width: 55px;
  display: flex;
  justify-content: center;
  padding-top: 14px;
  box-sizing: border-box;
  position: relative;
  z-index: 0;
}
.mark {
  position: absolute;
  left: 23px;
  top: 49px;
  width: 8px;
  height: 4px;
  border-radius: 2px;
  background: #8a8a8a;
}
.active .mark {
  left: 17px;
  width: 20px;
  background: #0078d7;
}
.app.active::before,
.app.active::after {
  content: "";
  position: absolute;
  z-index: -1;
  top: 5px;
  left: 3px;
  width: 43px;
  height: 48px;
  border-radius: 5px;
  background: #f8f8f8;
  box-shadow: 0 0 1px 1px #e0e0e0;
}
.app.active::before {
  width: 48px;
}
.tray {
  flex: 1;
  display: flex;
}
.chev {
  margin: 25px 0 0 110px;
}
.lang {
  width: 50px;
  margin: 9px 0 0 17px;
  display: flex;
  flex-direction: column;
  text-align: center;
  letter-spacing: -0.3px;
}
.wifi {
  margin: 21px 0 0 12px;
}
.vol {
  margin: 20px 0 0 10px;
}
.batt {
  margin: 19px 0 0 8.500px;
}
.clock {
  width: 97px;
  display: flex;
  flex-direction: column;
  text-align: right;
  margin: 8px 0 0;
  letter-spacing: -0.1px;
}
.bell {
  margin: 20px 0 0 11px;
}
</style>
